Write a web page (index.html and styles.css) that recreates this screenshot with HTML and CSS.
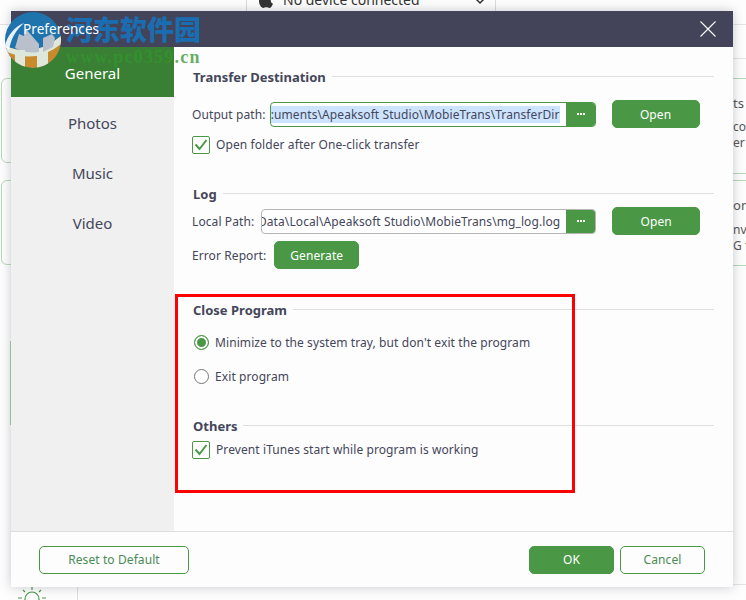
FILE: index.html
```html
<!DOCTYPE html>
<html lang="en">
<head>
<meta charset="utf-8">
<title>Preferences</title>
<link rel="stylesheet" href="styles.css">
</head>
<body>
<div class="desktop">
  <div class="bg-device">
    <svg class="bg-apple" width="14" height="16" viewBox="0 0 14 16"><path d="M10 0c0 2-1.500 3.500-3.300 3.500C6.600 1.700 8.200.2 10 0zM7 4.500c1 0 2-.8 3.300-.8 1.200 0 2.400.6 3.200 1.700-2.600 1.500-2.200 5.200.5 6.300-.8 2-2.200 4.300-3.700 4.300-1.200 0-1.600-.7-3-.7s-1.900.7-3 .7C2.200 16 0 12.300 0 9c0-3.200 2-5.200 4-5.200 1.200 0 2.200.7 3 .7z" fill="#333"/></svg>
    <span>No device connected</span>
    <svg class="bg-chevron" width="12" height="8" viewBox="0 0 12 8"><path d="M1 1l5 5 5-5" fill="none" stroke="#333" stroke-width="1.500"/></svg>
  </div>
  <div class="bg-line bg-line-top"></div>
  <div class="bg-line bg-line-right-a"></div>
  <div class="bg-line bg-line-right-b"></div>
  <div class="bg-card bg-card-a"></div>
  <div class="bg-card bg-card-b"></div>
  <div class="bg-stripe"></div>
  <div class="bg-right bg-right-a">
    <p class="bg-right-title">ts</p>
    <p>co</p>
    <p>er i</p>
  </div>
  <div class="bg-right bg-right-b">
    <p class="bg-right-title">on</p>
    <p>nv</p>
    <p>G f</p>
  </div>
  <svg class="bg-sun" width="32" height="14" viewBox="0 0 32 14"><g fill="none" stroke="#4c9a48" stroke-width="1.200"><circle cx="15" cy="12" r="7"/><path d="M15 0v3M6 3l2 2M24 3l-2 2M1 11h4M25 11h4"/></g></svg>
  <div class="bg-rail"></div>
  <div class="bg-line bg-line-bottom"></div>

  <section class="dialog">
    <header class="dialog-head">
      <h1>Preferences</h1>
      <svg class="close" width="16" height="16" viewBox="0 0 16 16"><path d="M.5.5l15 15M15.500.5l-15 15" stroke="#fff" stroke-width="1.100" fill="none"/></svg>
    </header>
    <div class="dialog-body">
      <nav class="side">
        <a class="side-item is-active">General</a>
        <a class="side-item">Photos</a>
        <a class="side-item">Music</a>
        <a class="side-item">Video</a>
      </nav>
      <main class="panel">
        <section class="group group-transfer">
          <h2 class="group-title"><span>Transfer Destination</span></h2>
          <div class="row row-path">
            <label class="path-label">Output path:</label>
            <div class="path path-active">
              <div class="path-value"><span class="selected">:uments\Apeaksoft Studio\MobieTrans\TransferDir</span></div>
              <button class="dots"><i></i><i></i><i></i></button>
            </div>
            <button class="btn btn-solid btn-open">Open</button>
          </div>
          <div class="check-row">
            <span class="check"><svg width="14" height="12" viewBox="0 0 14 12"><path d="M1.500 5.500l4 4.500 7-9" fill="none" stroke="#4a9845" stroke-width="2"/></svg></span>
            <span>Open folder after One-click transfer</span>
          </div>
        </section>

        <section class="group group-log">
          <h2 class="group-title"><span>Log</span></h2>
          <div class="row row-path">
            <label class="path-label">Local Path:</label>
            <div class="path path-log">
              <div class="path-value"><span>Data\Local\Apeaksoft Studio\MobieTrans\mg_log.log</span></div>
              <button class="dots"><i></i><i></i><i></i></button>
            </div>
            <button class="btn btn-solid btn-open">Open</button>
          </div>
          <div class="row row-report">
            <label class="path-label">Error Report:</label>
            <button class="btn btn-solid btn-generate">Generate</button>
          </div>
        </section>

        <section class="group group-close">
          <h2 class="group-title"><span>Close Program</span></h2>
          <div class="radio-row"><span class="radio is-on"></span><span>Minimize to the system tray, but don't exit the program</span></div>
          <div class="radio-row"><span class="radio"></span><span>Exit program</span></div>
        </section>

        <section class="group group-others">
          <h2 class="group-title"><span>Others</span></h2>
          <div class="check-row">
            <span class="check"><svg width="14" height="12" viewBox="0 0 14 12"><path d="M1.500 5.500l4 4.500 7-9" fill="none" stroke="#4a9845" stroke-width="2"/></svg></span>
            <span>Prevent iTunes start while program is working</span>
          </div>
        </section>
      </main>
    </div>
    <footer class="dialog-foot">
      <button class="btn btn-line btn-reset">Reset to Default</button>
      <div class="foot-actions">
        <button class="btn btn-solid btn-foot">OK</button>
        <button class="btn btn-line btn-foot">Cancel</button>
      </div>
    </footer>
  </section>

  <div class="highlight"></div>

  <div class="watermark">
    <svg class="wm-logo" width="56" height="56" viewBox="0 0 56 56">
      <defs><clipPath id="wm-disc"><circle cx="28" cy="28" r="28"/></clipPath></defs>
      <g clip-path="url(#wm-disc)">
        <rect width="56" height="56" fill="#1f74ad"/>
        <path d="M0 34Q30 46 56 24V56H0z" fill="#c98a2c"/>
        <path d="M0 34Q30 46 56 24V32Q32 52 2 40z" fill="#dde8da"/>
        <path d="M10 36l4-14 5 2 1-8 14 16v8q-12 2-24-4z" fill="#b9c0cc"/>
        <path d="M38 26l9-4 3 4-2 9-10 5z" fill="#b9c0cc"/>
        <path d="M10 38h10v18H10zM32 40h11v16H32z" fill="#dde8da"/>
      </g>
      <path d="M0 34C2 24 10 14 19 11 11 18 6 26 4 38z" fill="#fff" opacity=".9"/>
    </svg>
    <div class="wm-cn">河东软件园</div>
    <div class="wm-url">www.pc0359.cn</div>
  </div>
</div>
</body>
</html>
```

FILE: styles.css
```css
* { box-sizing: border-box; }
html, body { margin: 0; padding: 0; }
body { width: 746px; height: 600px; overflow: hidden; background: #fff; font-family: "Noto Sans", "Open Sans", sans-serif; font-size: 12px; letter-spacing: .09px; color: #44465a; }
p, h1, h2 { margin: 0; font-weight: normal; }
button { font-family: inherit; letter-spacing: inherit; cursor: pointer; padding: 0; }

.desktop { position: relative; width: 746px; height: 600px; overflow: hidden; background: #fdfdfd; }

/* Application window visible behind the dialog */
.bg-device { position: absolute; left: 246px; top: -12px; width: 250px; height: 24px; border: 1px solid #dcdcdc; border-top: 0; display: flex; align-items: center; padding-left: 12px; gap: 10px; font-size: 14px; letter-spacing: 0; color: #333; }
.bg-chevron { margin-left: 44px; margin-top: 3px; }
.bg-line { position: absolute; height: 1px; background: #e3e3e3; }
.bg-line-top { left: 0; top: 24px; width: 12px; }
.bg-line-right-a { left: 733px; top: 24px; width: 13px; }
.bg-line-right-b { left: 733px; top: 58px; width: 13px; }
.bg-line-bottom { left: 733px; top: 584px; width: 13px; }
.bg-card { position: absolute; left: 1px; width: 30px; border: 1px solid #b9d8b7; border-radius: 6px; }
.bg-card-a { top: 78px; height: 85px; }
.bg-card-b { top: 180px; height: 85px; }
.bg-stripe { position: absolute; left: 10px; top: 341px; width: 1px; height: 84px; background: #a9cfa7; }
.bg-right { position: absolute; left: 733px; width: 30px; border-top: 1px solid #b9d8b7; border-bottom: 1px solid #b9d8b7; color: #555; font-size: 12px; line-height: 16px; overflow: hidden; }
.bg-right-a { top: 78px; height: 96px; }
.bg-right-b { top: 180px; height: 86px; }
.bg-right-title { font-size: 13px; margin-top: 16px; margin-bottom: 8px; }
.bg-right-b .bg-right-title { margin-top: 16px; margin-bottom: 9px; }
.bg-sun { position: absolute; left: 17px; top: 587px; }
.bg-rail { position: absolute; left: 77px; top: 587px; width: 1px; height: 13px; background: #dedede; }

/* Dialog */
.dialog { position: absolute; left: 11px; top: 11px; width: 722px; height: 576px; display: flex; flex-direction: column; background: #fdfdfd; box-shadow: 0 0 10px rgba(60, 64, 90, .28); }
.dialog-head { flex: 0 0 36px; display: flex; align-items: center; justify-content: space-between; background: #434459; padding: 0 17px 0 12px; }
.dialog-head h1 { position: relative; z-index: 2; font-size: 13.5px; color: #fff; }
.dialog-body { flex: 1; display: flex; min-height: 0; }
.side { flex: 0 0 163px; background: #f0f0f0; display: flex; flex-direction: column; }
.side-item { height: 50px; display: flex; align-items: center; justify-content: center; padding-top: 2px; font-size: 15px; letter-spacing: 0; color: #44465a; }
.side-item.is-active { background: #3a8034; color: #fff; }
.panel { flex: 1; padding: 0 19px 0 18px; }

.group-title { display: flex; align-items: center; gap: 6px; height: 18px; padding-left: 1px; font-size: 13px; font-weight: 700; letter-spacing: 0; color: #44465a; }
.group-title::after { content: ""; flex: 1; height: 1px; background: #dfdfdf; margin-top: -2px; }
.group-transfer { padding-top: 21px; }
.group-log { margin-top: 31px; }
.group-close { margin-top: 32px; }
.group-others { margin-top: 32px; }

.row { display: flex; align-items: center; }
.row-path { height: 28px; margin-top: 14px; }
.group-log .row-path { margin-top: 4px; }
.path-label { flex: none; white-space: nowrap; color: #44465a; }
.path { flex: none; display: flex; height: 25px; margin-left: 4px; border: 1px solid #4a9845; border-radius: 4px; overflow: hidden; background: #fff; }
.path-active { width: 326px; }
.path-log { width: 335px; margin-left: 7px; border-color: #b5b5b5; }
.path-value { flex: 1; min-width: 0; overflow: hidden; white-space: nowrap; padding-left: 2px; display: flex; align-items: center; justify-content: flex-end; padding-right: 6px; }
.selected { background: #cce4ff; line-height: 17px; }
.dots { flex: 0 0 30px; margin: -1px -1px -1px 0; border: 0; background: #4a9845; display: flex; align-items: center; justify-content: center; gap: 1px; }
.dots i { width: 2px; height: 2px; background: #fff; }
.btn { flex: none; height: 28px; border-radius: 5px; font-size: 12px; }
.btn-solid { background: #4a9845; border: 1px solid #4a9845; color: #fff; }
.btn-line { background: #fdfdfd; border: 1px solid #4a9845; color: #4a8a55; }
.btn-open { width: 88px; margin-left: 16px; }
.row-report { height: 28px; margin-top: 6px; }
.btn-generate { width: 85px; margin-left: 8px; }

.check-row { display: flex; align-items: center; gap: 6px; height: 19px; margin-top: 7px; }
.group-others .check-row { margin-top: 5px; }
.check { flex: 0 0 18px; height: 18px; border: 1px solid #4a9845; border-radius: 2px; display: flex; align-items: center; justify-content: center; background: #fff; }
.radio-row { display: flex; align-items: center; gap: 6px; height: 18px; padding-left: 2px; margin-top: 14px; }
.radio-row + .radio-row { margin-top: 16px; }
.radio { flex: 0 0 15px; height: 15px; border: 1px solid #777; border-radius: 50%; background: #fff; }
.radio.is-on { border-color: #4a9845; background: #4a9845; box-shadow: inset 0 0 0 2px #fff; }

.dialog-foot { flex: 0 0 56px; border-top: 1px solid #dedede; display: flex; align-items: center; justify-content: space-between; padding: 0 28px; }
.btn-reset { width: 150px; }
.foot-actions { display: flex; gap: 6px; }
.btn-foot { width: 85px; }

/* Overlays */
.highlight { position: absolute; left: 175px; top: 294px; width: 400px; height: 199px; border: 3px solid #f00; pointer-events: none; }
.watermark { position: absolute; z-index: 1; left: 5px; top: 12px; width: 200px; height: 60px; letter-spacing: 0; }
.wm-logo { position: absolute; left: 0; top: 0; }
.wm-cn { position: absolute; left: 61px; top: 0; font-family: "Noto Sans CJK SC", sans-serif; font-weight: 900; font-size: 27px; line-height: 34px; color: #1b6db1; white-space: nowrap; }
.wm-url { position: absolute; left: 61px; top: 35px; font-family: "Liberation Serif", serif; font-weight: 700; font-size: 18px; line-height: 20px; letter-spacing: 1.2px; color: rgba(50, 150, 45, .75); white-space: nowrap; }
```
